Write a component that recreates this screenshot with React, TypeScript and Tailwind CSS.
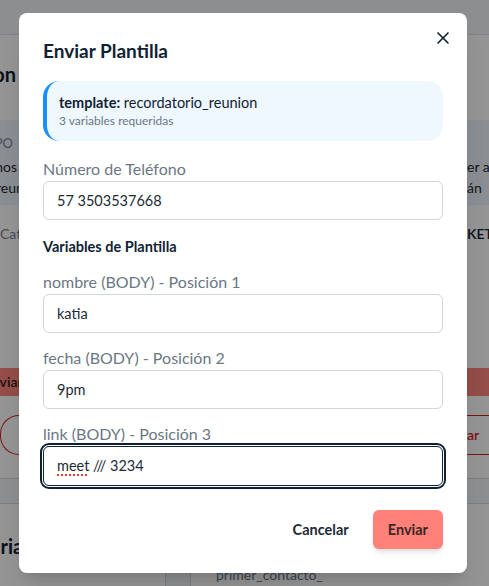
import React from "react";
import { X } from "lucide-react";

// a word of the page behind, cut by the window's left edge and by the dialog
function LeftClip({ children, className = "", shift = "" }: { children: React.ReactNode; className?: string; shift?: string }) {
  return (
    <div className="w-[19px] shrink-0 overflow-hidden">
      <span className={"block whitespace-nowrap " + shift + " " + className}>{children}</span>
    </div>
  );
}

function LeftTail({ children, className = "", w = "w-[19px]" }: { children: React.ReactNode; className?: string; w?: string }) {
  return (
    <div className={"flex shrink-0 justify-end overflow-hidden " + w}>
      <span className={"shrink-0 whitespace-nowrap " + className}>{children}</span>
    </div>
  );
}

function RightClip({ children, className = "" }: { children?: React.ReactNode; className?: string }) {
  return (
    <div className="w-[22px] shrink-0 overflow-hidden">
      <span className={"block whitespace-nowrap " + className}>{children}</span>
    </div>
  );
}

function BackgroundPage() {
  return (
    <div className="flex h-full flex-col">
      <div className="h-[35px] border-b border-[#dde3ea] bg-[#f3f5f8]" />
      <div className="flex h-[85px] items-center justify-between bg-white pb-[8px]">
        <div className="w-[19px]">
          <LeftTail w="w-[16px]" className="text-xl font-bold text-[#0f2233]">Recordatorio de Reunion</LeftTail>
        </div>
        <RightClip />
      </div>
      <div className="flex h-[85px] justify-between bg-[#eef5fc] pt-[14px]">
        <div className="flex w-[19px] flex-col">
          <LeftTail w="w-[13px]" className="text-[13px] uppercase leading-[18px] text-[#7a8591]">Tipo</LeftTail>
          <LeftTail w="w-[17px]" className="mt-[4px] text-sm leading-[22px] text-[#1e2a36]">Buenos</LeftTail>
          <LeftClip shift="-ml-[4px]" className="text-sm leading-[20px] text-[#1e2a36]">reunión de hoy</LeftClip>
        </div>
        <div className="flex w-[22px] flex-col pt-[22px]">
          <RightClip className="text-sm leading-[22px] text-[#1e2a36]">er a</RightClip>
          <RightClip className="text-sm leading-[20px] text-[#1e2a36]">án</RightClip>
        </div>
      </div>
      <div className="flex h-[274px] flex-col border-b border-[#d5dbe2] bg-white pt-[19px]">
        <div className="flex justify-between">
          <LeftClip className="text-sm leading-5 text-[#7a8591]">Categoría</LeftClip>
          <RightClip className="text-sm font-semibold leading-5 text-[#0f2233]">KETING</RightClip>
        </div>
        <div className="mt-[124px] flex h-[28px] items-center justify-between bg-[#ff857d]">
          <LeftClip shift="-ml-[16px]" className="text-sm font-semibold text-[#2a1f1f]">Enviar</LeftClip>
          <RightClip />
        </div>
        <div className="mt-[19px] flex h-[40px] justify-between">
          <div className="w-[19px] rounded-l-[20px] border border-r-0 border-[#d42020]" />
          <div className="flex w-[22px] items-center border-y border-[#d42020]">
            <span className="whitespace-nowrap text-sm font-semibold text-[#d42020]">ar</span>
          </div>
        </div>
      </div>
      <div className="flex flex-1 justify-between pt-[24px]">
        <div className="flex w-[166px] items-start border-r border-t border-[#d5dbe2] bg-white pt-[28px]">
          <LeftClip shift="-ml-[22px]" className="text-xl font-bold text-[#0f2233]">Variaciones</LeftClip>
        </div>
        <div className="ml-[24px] flex-1 border-l border-t border-[#d5dbe2] bg-white pl-[25px] pt-[58px]">
          <span className="text-sm text-[#6b7785]">primer_contacto_</span>
        </div>
      </div>
    </div>
  );
}

function Field({ label, value }: { label: string; value: string }) {
  return (
    <div className="mt-[13px]">
      <label className="block text-base leading-6 text-[#6b7785]">{label}</label>
      <input
        readOnly
        value={value}
        className="block h-[39px] w-full rounded-md border border-[#cfd6dd] bg-white px-[13px] text-[14.5px] text-[#1e2a36] outline-none"
      />
    </div>
  );
}

export default function App() {
  return (
    <div className="relative h-[586px] w-full overflow-hidden bg-[#f3f5f8] font-['Lato',sans-serif]">
      <BackgroundPage />

      <div className="absolute inset-0 flex items-start justify-center bg-black/[0.42] pr-[3px] pt-[13px]">
        <div className="relative w-[448px] rounded-lg bg-white p-6 shadow-xl">
          <button className="absolute right-[14px] top-[15px] text-[#0f2233]" aria-label="Cerrar">
            <X size={20} strokeWidth={2} />
          </button>

          <h2 className="text-[19px] font-bold leading-7 text-[#0f2233]">Enviar Plantilla</h2>

          <div className="mt-4 rounded-2xl border-l-4 border-[#1890ff] bg-[#eff7ff] py-3 pl-3 pr-4">
            <p className="text-[14.5px] leading-5 text-[#0f2233]">
              <span className="font-bold">template:</span> recordatorio_reunion
            </p>
            <p className="text-xs leading-4 text-[#6b7785]">3 variables requeridas</p>
          </div>

          <div className="mt-4">
            <label className="block text-base leading-6 text-[#6b7785]">Número de Teléfono</label>
            <input
              readOnly
              value="57 3503537668"
              className="block h-[39px] w-full rounded-md border border-[#cfd6dd] bg-white px-[13px] text-[14.5px] text-[#1e2a36] outline-none"
            />
          </div>

          <h3 className="mt-[17px] text-[14.5px] font-bold leading-5 text-[#0f2233]">Variables de Plantilla</h3>

          <Field label="nombre (BODY) - Posición 1" value="katia" />
          <Field label="fecha (BODY) - Posición 2" value="9pm" />

          <div className="mt-[13px]">
            <label className="block text-base leading-6 text-[#6b7785]">link (BODY) - Posición 3</label>
            <div className="flex h-[40px] w-full items-center rounded-md border border-[#0f2233] bg-white px-[13px] text-[14.5px] text-[#1e2a36] ring-2 ring-[#0f2233] ring-offset-1">
              <span className="underline decoration-[#e53935] decoration-dotted decoration-2 underline-offset-[3px]">meet</span>
              <span className="whitespace-pre"> /// 3234</span>
            </div>
          </div>

          <div className="mt-6 flex justify-end gap-2">
            <button className="h-[39px] px-4 text-[14.5px] font-bold text-[#1e2a36]">Cancelar</button>
            <button className="h-[39px] rounded-md bg-[#ff817a] px-[15px] text-[14.5px] font-bold text-[#3a2626] shadow-md">
              Enviar
            </button>
          </div>
        </div>
      </div>
    </div>
  );
}
